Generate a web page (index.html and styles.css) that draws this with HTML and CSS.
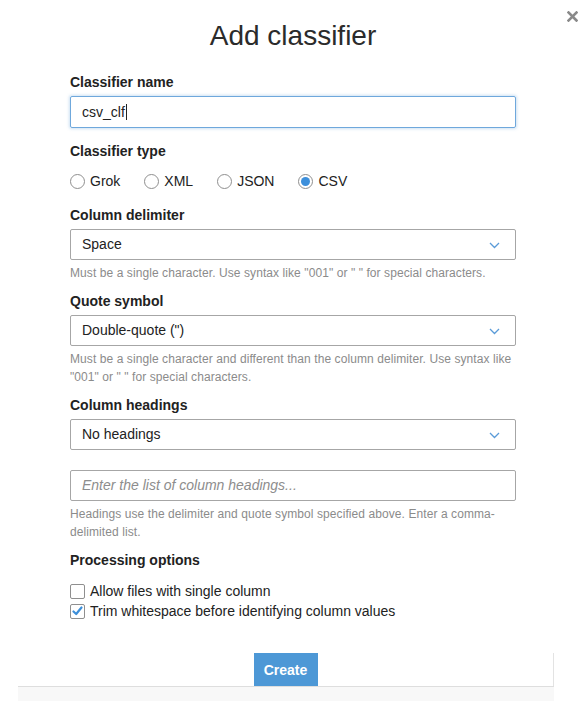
FILE: index.html
```html
<!DOCTYPE html>
<html>
<head>
<meta charset="utf-8">
<link rel="stylesheet" href="styles.css">
</head>
<body>
<div class="modal">
  <button class="close" aria-label="Close">
    <svg width="11" height="11" viewBox="0 0 11 11"><path d="M1.5 1.5 L9.5 9.5 M9.5 1.5 L1.5 9.5" stroke="#8a8a8a" stroke-width="2.6" stroke-linecap="square"/></svg>
  </button>
  <h1 class="title">Add classifier</h1>
  <form class="form">
    <label class="label first">Classifier name</label>
    <div class="input focus">csv_clf<span class="caret"></span></div>

    <label class="label l-type">Classifier type</label>
    <div class="radios">
      <span class="radio"><span class="dot"></span>Grok</span>
      <span class="radio"><span class="dot"></span>XML</span>
      <span class="radio"><span class="dot"></span>JSON</span>
      <span class="radio"><span class="dot on"></span>CSV</span>
    </div>

    <label class="label l-delim">Column delimiter</label>
    <div class="select">Space<svg class="chev" width="11" height="7" viewBox="0 0 11 7"><path d="M1 1 L5.5 5.5 L10 1" fill="none" stroke="#5a9bd8" stroke-width="1.3"/></svg></div>
    <p class="help">Must be a single character. Use syntax like "001" or " " for special characters.</p>

    <label class="label l-next">Quote symbol</label>
    <div class="select">Double-quote (")<svg class="chev" width="11" height="7" viewBox="0 0 11 7"><path d="M1 1 L5.5 5.5 L10 1" fill="none" stroke="#5a9bd8" stroke-width="1.3"/></svg></div>
    <p class="help">Must be a single character and different than the column delimiter. Use syntax like "001" or " " for special characters.</p>

    <label class="label l-next">Column headings</label>
    <div class="select">No headings<svg class="chev" width="11" height="7" viewBox="0 0 11 7"><path d="M1 1 L5.5 5.5 L10 1" fill="none" stroke="#5a9bd8" stroke-width="1.3"/></svg></div>
    <div class="input placeholder">Enter the list of column headings...</div>
    <p class="help">Headings use the delimiter and quote symbol specified above. Enter a comma-delimited list.</p>

    <label class="label l-proc">Processing options</label>
    <div class="checks">
      <span class="check"><span class="box"></span>Allow files with single column</span>
      <span class="check"><span class="box on"><svg width="11" height="10" viewBox="0 0 11 10"><path d="M1.5 5.5 L4.2 8 L9.5 1.5" fill="none" stroke="#3d8fd9" stroke-width="2.2" stroke-linecap="round" stroke-linejoin="round"/></svg></span>Trim whitespace before identifying column values</span>
    </div>
  </form>
  <div class="footer">
    <div class="footer-row"><button class="create">Create</button></div>
    <div class="footer-band"></div>
  </div>
</div>
</body>
</html>
```
FILE: styles.css
```css
* { box-sizing: border-box; }
html, body { margin: 0; padding: 0; background: #fff; }
body {
  font-family: "Liberation Sans", Arial, sans-serif;
  color: #222;
  width: 586px;
  height: 701px;
  overflow: hidden;
}
.modal { position: relative; padding-top: 20px; }
.close {
  position: absolute;
  top: 11px;
  left: 567px;
  border: 0;
  background: none;
  padding: 0;
  width: 11px;
  height: 11px;
  display: block;
}
.close svg { display: block; }
.title {
  margin: 0;
  text-align: center;
  font-weight: normal;
  font-size: 28px;
  line-height: 32px;
  color: #2b2b2b;
}
.form {
  margin: 0 0 0 70px;
  width: 446px;
  display: flex;
  flex-direction: column;
}
.label {
  display: block;
  font-weight: bold;
  font-size: 14px;
  line-height: 20px;
  color: #222;
}
.first { margin-top: 20px; }
.l-type { margin-top: 13px; }
.l-delim { margin-top: 14px; }
.l-next { margin-top: 9px; }
.l-proc { margin-top: 9px; }
.input, .select {
  margin-top: 4px;
  height: 31px;
  border: 1px solid #a6a6a6;
  border-radius: 2px;
  font-size: 14px;
  line-height: 29px;
  padding: 0 11px;
  color: #222;
  display: flex;
  align-items: center;
}
.input.focus {
  height: 32px;
  border-color: #6fa8dc;
  box-shadow: 0 0 3px 1px rgba(111,168,220,0.35);
}
.caret {
  display: inline-block;
  width: 1px;
  height: 16px;
  background: #222;
  margin-left: 1px;
}
.select { justify-content: space-between; }
.chev { margin-right: 4px; margin-top: 1px; }
.placeholder {
  margin-top: 20px;
  font-style: italic;
  color: #8d8d8d;
}
.help {
  margin: 4px 0 0;
  font-size: 12px;
  line-height: 18px;
  color: #8b8b8b;
  letter-spacing: 0.08px;
}
.radios {
  margin-top: 10px;
  display: flex;
  gap: 24px;
  font-size: 14px;
  line-height: 20px;
}
.radio { display: flex; align-items: center; }
.dot {
  width: 15px;
  height: 15px;
  border: 1px solid #8f8f8f;
  border-radius: 50%;
  margin-right: 5px;
  display: flex;
  align-items: center;
  justify-content: center;
}
.dot.on::after {
  content: "";
  width: 9px;
  height: 9px;
  border-radius: 50%;
  background: #3d8fdb;
}
.checks {
  margin-top: 11px;
  display: flex;
  flex-direction: column;
  font-size: 14px;
  line-height: 20px;
}
.check { display: flex; align-items: center; }
.box {
  width: 15px;
  height: 15px;
  border: 1px solid #8f8f8f;
  border-radius: 2px;
  margin-right: 5px;
  display: flex;
  align-items: center;
  justify-content: center;
}
.footer {
  margin: 32px 0 0 18px;
  width: 536px;
}
.footer-row {
  display: flex;
  justify-content: center;
  border-right: 1px solid #e3e3e3;
}
.create {
  width: 64px;
  height: 33px;
  border: 0;
  border-radius: 0;
  background: #4d98d6;
  color: #fff;
  font-family: "Liberation Sans", Arial, sans-serif;
  font-weight: bold;
  font-size: 14px;
  padding: 0;
}
.footer-band {
  height: 16px;
  border-top: 1px solid #dedede;
  background: #f8f8f8;
}
```
